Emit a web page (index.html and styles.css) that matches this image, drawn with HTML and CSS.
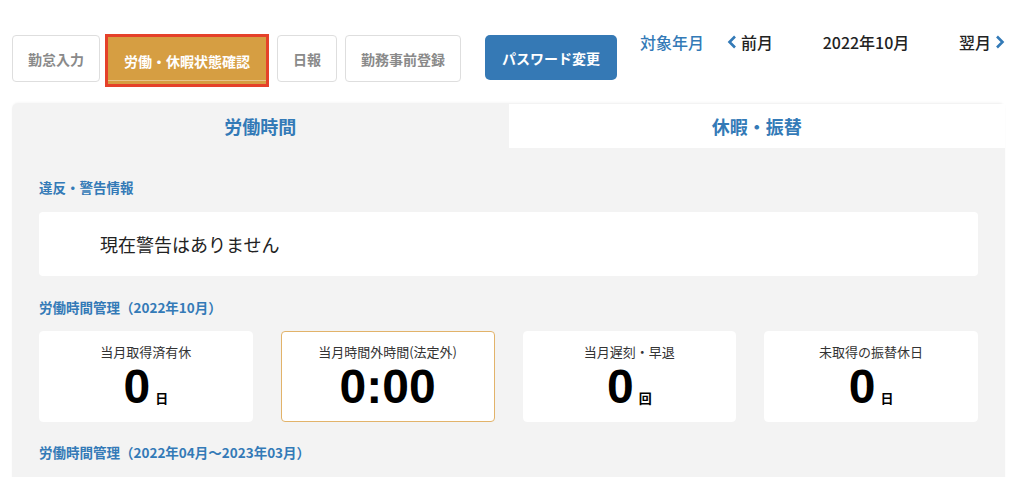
FILE: index.html
```html
<!DOCTYPE html>
<html>
  <head>
    <title>労働・休暇状態確認</title>
    <meta charset="utf-8"/>
    <meta name="viewport" content="width=device-width, initial-scale=1"/>
    <link rel="stylesheet" href="styles.css">
  </head>
  <body>
    <div id="toolbar">
      <div id="menu">
        <button class="menu-btn">勤怠入力</button>
        <button class="menu-btn active">労働・休暇状態確認</button>
        <button class="menu-btn">日報</button>
        <button class="menu-btn">勤務事前登録</button>
        <button class="menu-btn primary">パスワード変更</button>
      </div>

      <div id="month-nav">
        <span class="nav-label">対象年月</span>
        <a class="nav-link prev">
          <svg width="10" height="14" viewBox="0 0 10 14"><path d="M8 1.5 L2.5 7 L8 12.5" fill="none" stroke="#337ab7" stroke-width="2.6"/></svg>
          前月
        </a>
        <span class="nav-current">2022年10月</span>
        <a class="nav-link next">
          翌月
          <svg width="10" height="14" viewBox="0 0 10 14"><path d="M2 1.5 L7.5 7 L2 12.5" fill="none" stroke="#337ab7" stroke-width="2.6"/></svg>
        </a>
      </div>
    </div>

    <div id="panel">
      <div class="tabs">
        <div class="tab current">労働時間</div>
        <div class="tab">休暇・振替</div>
      </div>

      <div class="tab-body">
        <h3 class="section-title">違反・警告情報</h3>
        <div class="notice">現在警告はありません</div>

        <h3 class="section-title">労働時間管理（2022年10月）</h3>
        <div class="cards">
          <div class="card">
            <div class="card-label">当月取得済有休</div>
            <div class="card-value">0<small>日</small></div>
          </div>
          <div class="card warn">
            <div class="card-label">当月時間外時間(法定外)</div>
            <div class="card-value">0:00</div>
          </div>
          <div class="card">
            <div class="card-label">当月遅刻・早退</div>
            <div class="card-value">0<small>回</small></div>
          </div>
          <div class="card">
            <div class="card-label">未取得の振替休日</div>
            <div class="card-value">0<small>日</small></div>
          </div>
        </div>

        <h3 class="section-title">労働時間管理（2022年04月～2023年03月）</h3>
      </div>
    </div>
  </body>
</html>
```

FILE: styles.css
```css
html {height: 100%;}
body {
  margin: 0;
  padding: 0 19px 0 12px;
  font-family: "Noto Sans CJK JP", "Noto Sans", sans-serif;
  background: white;
  color: #222;
  overflow: hidden;
}

#toolbar {
  display: flex;
  align-items: flex-start;
  padding-top: 35px;
  height: 68px;
}

#menu {
  display: flex;
  align-items: flex-start;
}

.menu-btn {
  height: 47px;
  padding: 0 15px;
  margin-right: 8px;
  border: 1px solid #dedede;
  border-radius: 4px;
  background: white;
  color: #8a8a8a;
  font-family: inherit;
  font-size: 14px;
  font-weight: 700;
}
.menu-btn.active {
  height: 53px;
  margin-top: -1px;
  margin-left: -3px;
  padding: 0 16px;
  border: 3px solid #e5412a;
  border-radius: 0;
  background: #d69e42;
  color: white;
  box-shadow: inset 0 -3px 0 #d69e42, inset 0 -4px 0 #e8c48a;
}
.menu-btn.primary {
  height: 45px;
  margin-left: 16px;
  margin-right: 0;
  padding: 0 17px;
  border: none;
  border-radius: 5px;
  background: #3579b5;
  color: white;
}

#month-nav {
  flex: 1;
  display: flex;
  align-items: center;
  margin-left: 23px;
  margin-top: -2px;
  height: 18px;
  font-size: 16px;
  line-height: 18px;
}
.nav-label {
  color: #337ab7;
  font-weight: 500;
  margin-right: 23px;
}
.nav-link {
  display: flex;
  align-items: center;
  gap: 4px;
  color: #222;
  font-weight: 500;
}
.nav-current {
  margin: 0 auto;
  font-weight: 500;
  color: #222;
}

#panel {
  background: #f3f3f3;
  border-radius: 6px 6px 0 0;
  box-shadow: 0 -1px 2px rgba(0,0,0,0.03);
}

.tabs {
  display: grid;
  grid-template-columns: 1fr 1fr;
  height: 45px;
}
.tab {
  display: flex;
  align-items: center;
  justify-content: center;
  background: white;
  color: #337ab7;
  font-size: 18px;
  font-weight: 700;
  margin-top: 1px;
}
.tab.current {
  background: transparent;
  margin-top: 0;
}

.tab-body {
  padding: 29px 27px 20px;
}

.section-title {
  margin: 0;
  font-size: 13.5px;
  line-height: 20px;
  font-weight: 700;
  color: #337ab7;
}

.notice {
  margin: 15px 0 21px;
  height: 64px;
  padding-left: 61px;
  display: flex;
  align-items: center;
  background: white;
  border-radius: 4px;
  font-size: 18px;
  color: #222;
}

.cards {
  display: grid;
  grid-template-columns: repeat(4, 1fr);
  gap: 28px;
  margin: 14px 0 20px;
}
.card {
  height: 91px;
  box-sizing: border-box;
  background: white;
  border-radius: 4px;
  border: 1px solid white;
  text-align: center;
}
.card.warn {
  border-color: #e2b36a;
}
.card-label {
  margin-top: 11px;
  font-size: 13px;
  line-height: 18px;
  color: #333;
}
.card-value {
  margin-top: 2px;
  font-family: "Liberation Sans", Arial, sans-serif;
  font-size: 48px;
  line-height: 48px;
  font-weight: 700;
  color: #000;
}
.card-value small {
  font-family: "Noto Sans CJK JP", sans-serif;
  font-size: 13px;
  line-height: 13px;
  margin-left: 5px;
}
```
